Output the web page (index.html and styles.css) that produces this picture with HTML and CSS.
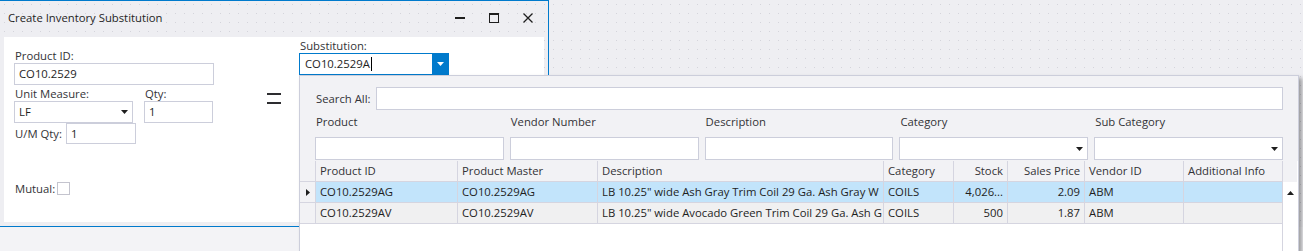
FILE: index.html
```html
<!DOCTYPE html>
<html lang="en">
<head>
    <meta charset="UTF-8">
    <meta name="viewport" content="width=device-width, initial-scale=1.0">
    <title>Create Inventory Substitution</title>
    <link rel="stylesheet" href="styles.css">
</head>
<body>
    <div class="desktop">
        <div class="window">
            <div class="titlebar">
                <span class="title">Create Inventory Substitution</span>
                <div class="win-buttons">
                    <span class="win-btn">
                        <svg width="10" height="10" viewBox="0 0 10 10"><rect x="0" y="4" width="10" height="2" fill="#1e1e1e"/></svg>
                    </span>
                    <span class="win-btn">
                        <svg width="10" height="10" viewBox="0 0 10 10"><rect x="0.5" y="0.5" width="9" height="9" fill="none" stroke="#1e1e1e"/><rect x="0" y="0" width="10" height="2" fill="#1e1e1e"/></svg>
                    </span>
                    <span class="win-btn">
                        <svg width="10" height="10" viewBox="0 0 10 10"><path d="M0.5 0.5L9.5 9.5M9.5 0.5L0.5 9.5" stroke="#1e1e1e" stroke-width="1.3"/></svg>
                    </span>
                </div>
            </div>

            <div class="panel">
                <div class="source">
                    <div class="field-label">Product ID:</div>
                    <div class="textbox">CO10.2529</div>

                    <div class="measure">
                        <div class="measure-unit">
                            <div class="field-label">Unit Measure:</div>
                            <div class="textbox combo">
                                <span>LF</span>
                                <svg width="7" height="4" viewBox="0 0 7 4"><path d="M0 0h7L3.5 4z" fill="#1e1e1e"/></svg>
                            </div>
                        </div>
                        <div class="measure-qty">
                            <div class="field-label">Qty:</div>
                            <div class="textbox">1</div>
                        </div>
                    </div>

                    <div class="um-row">
                        <div class="field-label">U/M Qty:</div>
                        <div class="textbox">1</div>
                    </div>

                    <div class="mutual-row">
                        <div class="field-label">Mutual:</div>
                        <div class="checkbox"></div>
                    </div>
                </div>

                <div class="equals"></div>

                <div class="target">
                    <div class="field-label">Substitution:</div>
                    <div class="textbox combo combo-focus">
                        <span class="combo-text">CO10.2529A<span class="caret"></span></span>
                        <span class="combo-btn">
                            <svg width="7" height="4" viewBox="0 0 7 4"><path d="M0 0h7L3.5 4z" fill="#fff"/></svg>
                        </span>
                    </div>
                </div>
            </div>
        </div>

        <!-- dropdown of the Substitution combo -->
        <div class="dropdown">
            <div class="search-row">
                <div class="field-label">Search All:</div>
                <div class="textbox"></div>
            </div>

            <div class="filters">
                <div class="filter">
                    <div class="field-label">Product</div>
                    <div class="textbox"></div>
                </div>
                <div class="filter">
                    <div class="field-label">Vendor Number</div>
                    <div class="textbox"></div>
                </div>
                <div class="filter">
                    <div class="field-label">Description</div>
                    <div class="textbox"></div>
                </div>
                <div class="filter">
                    <div class="field-label">Category</div>
                    <div class="textbox combo">
                        <span></span>
                        <svg width="7" height="4" viewBox="0 0 7 4"><path d="M0 0h7L3.5 4z" fill="#1e1e1e"/></svg>
                    </div>
                </div>
                <div class="filter">
                    <div class="field-label">Sub Category</div>
                    <div class="textbox combo">
                        <span></span>
                        <svg width="7" height="4" viewBox="0 0 7 4"><path d="M0 0h7L3.5 4z" fill="#1e1e1e"/></svg>
                    </div>
                </div>
            </div>

            <div class="grid">
                <div class="grid-main">
                    <div class="grid-row head">
                        <div class="cell row-header"></div>
                        <div class="cell">Product ID</div>
                        <div class="cell">Product Master</div>
                        <div class="cell">Description</div>
                        <div class="cell">Category</div>
                        <div class="cell num">Stock</div>
                        <div class="cell num">Sales Price</div>
                        <div class="cell">Vendor ID</div>
                        <div class="cell">Additional Info</div>
                    </div>
                    <div class="grid-row selected">
                        <div class="cell row-header">
                            <svg width="4" height="7" viewBox="0 0 4 7"><path d="M0 0v7l4-3.5z" fill="#1e1e1e"/></svg>
                        </div>
                        <div class="cell">CO10.2529AG</div>
                        <div class="cell">CO10.2529AG</div>
                        <div class="cell">LB 10.25" wide Ash Gray Trim Coil 29 Ga. Ash Gray W</div>
                        <div class="cell">COILS</div>
                        <div class="cell num">4,026...</div>
                        <div class="cell num">2.09</div>
                        <div class="cell">ABM</div>
                        <div class="cell"></div>
                    </div>
                    <div class="grid-row alt">
                        <div class="cell row-header"></div>
                        <div class="cell">CO10.2529AV</div>
                        <div class="cell">CO10.2529AV</div>
                        <div class="cell">LB 10.25" wide Avocado Green Trim Coil 29 Ga. Ash G</div>
                        <div class="cell">COILS</div>
                        <div class="cell num">500</div>
                        <div class="cell num">1.87</div>
                        <div class="cell">ABM</div>
                        <div class="cell"></div>
                    </div>
                </div>
                <div class="vscroll">
                    <div class="vscroll-head"></div>
                    <div class="vscroll-up">
                        <svg width="7" height="4" viewBox="0 0 7 4"><path d="M0 4h7L3.5 0z" fill="#1e1e1e"/></svg>
                    </div>
                </div>
            </div>
        </div>
    </div>
</body>
</html>
```

FILE: styles.css
```css
* {
    box-sizing: border-box;
}
html, body {
    height: 100%;
}
body {
    margin: 0;
    background: #f3f3f6;
    font-family: 'Open Sans', 'Noto Sans', sans-serif;
    font-size: 11.3px;
    color: #1e1e1e;
}
.desktop {
    position: relative;
    height: 227px;
    background-color: #eeeef2;
    background-image: radial-gradient(circle, #d4d4db 0.6px, transparent 0.9px);
    background-size: 9px 9px;
}

/* window */
.window {
    width: 549px;
    height: 227px;
    border-top: 1px solid #007acc;
    border-right: 1px solid #007acc;
    border-bottom: 1px solid #007acc;
    display: flex;
    flex-direction: column;
}
.titlebar {
    height: 36px;
    display: flex;
    align-items: center;
    justify-content: space-between;
    padding: 0 3px 3px 8px;
}
.title {
    color: #1e1e1e;
}
.win-buttons {
    display: flex;
}
.win-btn {
    width: 34px;
    height: 20px;
    display: flex;
    align-items: center;
    justify-content: center;
}
.panel {
    height: 185px;
    margin: 0 4px;
    background: #fff;
    display: flex;
}

/* fields */
.field-label {
    height: 15px;
    line-height: 15px;
    padding-left: 1px;
    color: #333337;
    white-space: nowrap;
}
.textbox {
    height: 22px;
    border: 1px solid #cccedb;
    background: #fff;
    padding: 0 4px;
    line-height: 20px;
    white-space: nowrap;
}
.combo {
    display: flex;
    align-items: center;
    justify-content: space-between;
    padding-right: 4px;
}
.source {
    width: 200px;
    margin-left: 10px;
    padding-top: 11px;
}
.measure {
    display: flex;
    gap: 11px;
    margin-top: 1px;
}
.measure-unit {
    width: 119px;
}
.measure-qty {
    width: 69px;
}
.um-row {
    display: flex;
    align-items: center;
    height: 21px;
}
.um-row .field-label {
    width: 52px;
}
.um-row .textbox {
    width: 70px;
    height: 21px;
    line-height: 19px;
}
.mutual-row {
    display: flex;
    align-items: center;
    height: 13px;
    margin-top: 38px;
}
.mutual-row .field-label {
    width: 43px;
}
.checkbox {
    width: 13px;
    height: 13px;
    border: 1px solid #c4c4ce;
    background: #fff;
}
.equals {
    width: 14px;
    height: 11px;
    margin: 56px 0 0 53px;
    border-top: 2px solid #2d2d30;
    border-bottom: 2px solid #2d2d30;
}
.target {
    width: 150px;
    margin: 1px 0 0 18px;
}
.combo-focus {
    border-color: #007acc;
    padding: 0;
}
.combo-text {
    display: flex;
    align-items: center;
    padding-left: 5px;
}
.caret {
    width: 1px;
    height: 14px;
    margin-left: 1px;
    background: #000;
}
.combo-btn {
    width: 16px;
    align-self: stretch;
    background: #007acc;
    display: flex;
    align-items: center;
    justify-content: center;
}

/* dropdown */
.dropdown {
    position: absolute;
    left: 299px;
    top: 75px;
    width: 1000px;
    height: 176px;
    border: 1px solid #cccedb;
    border-bottom: none;
    background: #f2f2f5;
    box-shadow: 3px 3px 4px rgba(0,0,0,0.35);
    display: flex;
    flex-direction: column;
}
.search-row {
    display: flex;
    align-items: center;
    padding: 11px 15px 0;
}
.search-row .field-label {
    width: 61px;
}
.search-row .textbox {
    flex: 1;
    height: 23px;
}
.filters {
    display: grid;
    grid-template-columns: repeat(5, 1fr);
    column-gap: 6px;
    padding: 4px 15px 0;
}
.filter .field-label {
    height: 16px;
    line-height: 16px;
    margin-bottom: 7px;
}
.filter .textbox {
    height: 23px;
}

/* grid */
.grid {
    flex: 1;
    display: flex;
    margin-top: 1px;
    background: #fff;
}
.grid-main {
    width: 982px;
}
.grid-row {
    display: grid;
    grid-template-columns: 15px 142px 140px 286px 70px 54px 77px 99px 99px;
    height: 21px;
}
.cell {
    border-left: 1px solid #d5d5e0;
    border-bottom: 1px solid #d5d5e0;
    padding: 0 4px;
    line-height: 20px;
    white-space: nowrap;
    overflow: hidden;
}
.cell.row-header {
    border-left: none;
    padding: 0;
    display: flex;
    align-items: center;
    justify-content: center;
}
.head .cell {
    background: #f2f2f5;
    color: #333337;
}
.selected .cell {
    background: #c2e4fb;
}
.alt .cell {
    background: #f0f0f1;
}
.grid-row .row-header {
    background: #f2f2f5;
}
.num {
    text-align: right;
}
.vscroll {
    width: 15px;
    border-left: 1px solid #d5d5e0;
}
.vscroll-head {
    height: 21px;
    background: #f2f2f5;
}
.vscroll-up {
    height: 21px;
    display: flex;
    align-items: center;
    justify-content: center;
}
```
